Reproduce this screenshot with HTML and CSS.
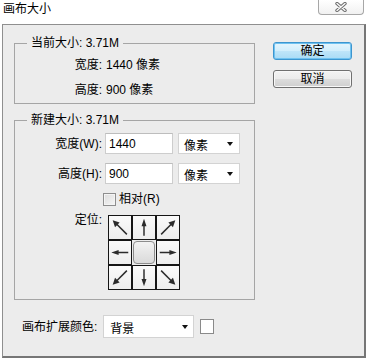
FILE: index.html
```html
<!DOCTYPE html>
<html lang="zh-CN">
<head>
<meta charset="utf-8">
<title>画布大小</title>
<link rel="stylesheet" href="styles.css">
</head>
<body>
<svg class="defs" width="0" height="0" aria-hidden="true">
  <defs>
    <symbol id="arr-n" viewBox="0 0 24 24">
      <line x1="12" y1="21" x2="12" y2="9" stroke="#2b2b2b" stroke-width="1.6"/>
      <polygon points="12,2.5 9.3,10.5 14.7,10.5" fill="#2b2b2b"/>
    </symbol>
    <symbol id="arr-ne" viewBox="0 0 24 24">
      <line x1="4.5" y1="19.5" x2="15.5" y2="8.5" stroke="#2b2b2b" stroke-width="1.6"/>
      <polygon points="20,4 17.4,11.6 12.4,6.6" fill="#2b2b2b"/>
    </symbol>
  </defs>
</svg>

<div class="titlebar">
  <span class="title">画布大小</span>
  <div class="close">
    <svg width="12" height="10" viewBox="0 0 12 10">
      <path d="M2 1.5 L10 8.5 M10 1.5 L2 8.5" stroke="#6c6c6c" stroke-width="3.4" stroke-linecap="round"/>
      <path d="M2 1.5 L10 8.5 M10 1.5 L2 8.5" stroke="#fbfbfb" stroke-width="1.4" stroke-linecap="round"/>
    </svg>
  </div>
</div>

<div class="panel">
  <div class="top">
    <div class="left">
      <fieldset class="group g1">
        <legend>当前大小: 3.71M</legend>
        <div class="row info"><span class="lbl">宽度:</span><span class="val">1440 像素</span></div>
        <div class="row info"><span class="lbl">高度:</span><span class="val">900 像素</span></div>
      </fieldset>

      <fieldset class="group g2">
        <legend>新建大小: 3.71M</legend>
        <div class="row field">
          <span class="lbl">宽度(W):</span>
          <span class="input">1440</span>
          <span class="select unit"><span class="sel-text">像素</span><span class="caret"></span></span>
        </div>
        <div class="row field second">
          <span class="lbl">高度(H):</span>
          <span class="input">900</span>
          <span class="select unit"><span class="sel-text">像素</span><span class="caret"></span></span>
        </div>
        <div class="row check">
          <span class="box"></span><span class="check-text">相对(R)</span>
        </div>
        <div class="row anchor">
          <span class="lbl anchor-lbl">定位:</span>
          <div class="grid">
            <span class="cell"><svg viewBox="0 0 24 24"><use href="#arr-ne" transform="rotate(-90 12 12)"/></svg></span>
            <span class="cell"><svg viewBox="0 0 24 24"><use href="#arr-n"/></svg></span>
            <span class="cell"><svg viewBox="0 0 24 24"><use href="#arr-ne"/></svg></span>
            <span class="cell"><svg viewBox="0 0 24 24"><use href="#arr-n" transform="rotate(-90 12 12)"/></svg></span>
            <span class="cell center"><span class="knob"></span></span>
            <span class="cell"><svg viewBox="0 0 24 24"><use href="#arr-n" transform="rotate(90 12 12)"/></svg></span>
            <span class="cell"><svg viewBox="0 0 24 24"><use href="#arr-ne" transform="rotate(180 12 12)"/></svg></span>
            <span class="cell"><svg viewBox="0 0 24 24"><use href="#arr-n" transform="rotate(180 12 12)"/></svg></span>
            <span class="cell"><svg viewBox="0 0 24 24"><use href="#arr-ne" transform="rotate(90 12 12)"/></svg></span>
          </div>
        </div>
      </fieldset>
    </div>

    <div class="buttons">
      <span class="btn primary">确定</span>
      <span class="btn">取消</span>
    </div>
  </div>

  <div class="bottom">
    <span class="bottom-lbl">画布扩展颜色:</span>
    <span class="select ext"><span class="sel-text">背景</span><span class="caret"></span></span>
    <span class="swatch"></span>
  </div>
</div>
</body>
</html>
```

FILE: styles.css
```css
* { box-sizing: border-box; }

html, body { margin: 0; padding: 0; }

body {
  width: 367px;
  height: 360px;
  overflow: hidden;
  background: #ffffff;
  color: #000;
  font-family: "Liberation Sans", "Noto Sans CJK SC", sans-serif;
  font-size: 12px;
  line-height: 16px;
}

.defs { position: absolute; width: 0; height: 0; overflow: hidden; }

/* title bar */
.titlebar {
  height: 24px;
  display: flex;
  justify-content: space-between;
  align-items: flex-start;
}

.title {
  margin: 1px 0 0 3px;
}

.close {
  margin-right: 3px;
  width: 46px;
  height: 15px;
  border: 1px solid #a7a7a7;
  border-top: none;
  border-radius: 0 0 4px 4px;
  background: linear-gradient(#ffffff, #f1f1f1);
  display: flex;
  align-items: center;
  justify-content: center;
}

/* main panel */
.panel {
  margin-left: 2px;
  width: 364px;
  height: 334px;
  border: 1px solid #8f8f8f;
  border-right: 2px solid #767676;
  border-bottom: 2px solid #767676;
  background: #ececec;
}

.top { display: flex; }

.left {
  margin-left: 11px;
  width: 241px;
}

.group {
  margin: 0;
  padding: 0;
  min-width: 0;
  border: 1px solid #a5a5a5;
}

.group legend {
  margin-left: 12px;
  padding: 0 4px;
  line-height: 16px;
}

.g1 {
  margin-top: 10px;
  padding: 1px 0 1px;
}

.g2 {
  margin-top: 8px;
  padding: 5px 0 9px;
}

.row {
  display: flex;
  align-items: center;
}

.info { height: 25px; }

.lbl {
  width: 87px;
  flex: none;
  text-align: right;
}

.val { margin-left: 4px; }

.field { height: 21px; }
.field.second { margin-top: 9px; }

.input {
  margin-left: 3px;
  width: 68px;
  height: 21px;
  padding: 2px 0 0 3px;
  background: #fff;
  border: 1px solid #cdcdcd;
  border-top-color: #bdbdbd;
}

.select {
  display: flex;
  justify-content: space-between;
  align-items: center;
  background: #fff;
  border: 1px solid #d3d3d3;
}

.sel-text { padding-top: 4px; }

.caret {
  width: 0;
  height: 0;
  border-left: 3px solid transparent;
  border-right: 3px solid transparent;
  border-top: 4px solid #111;
}

.unit {
  margin-left: 5px;
  width: 62px;
  height: 21px;
  padding: 0 6px 0 5px;
}

.check {
  margin-top: 8px;
  height: 14px;
}

.box {
  margin-left: 88px;
  width: 13px;
  height: 13px;
  border: 1px solid #8e8e8e;
  background: linear-gradient(135deg, #dcdcdc, #f6f6f6);
  box-shadow: inset 0 0 0 1px #f4f4f4;
}

.check-text { margin-left: 3px; }

.anchor {
  margin-top: 9px;
  align-items: flex-start;
}

.anchor-lbl { margin-top: -3px; }

.grid {
  margin-left: 6px;
  display: grid;
  grid-template-columns: repeat(3, 24px);
  grid-template-rows: repeat(3, 25px);
}

.cell {
  border: 1px solid #151515;
  background: linear-gradient(#fafafa, #ededed);
  display: flex;
  align-items: center;
  justify-content: center;
}

.cell svg {
  width: 22px;
  height: 23px;
  display: block;
}

.cell.center {
  border: none;
  background: transparent;
  padding: 1px;
}

.knob {
  width: 100%;
  height: 100%;
  border: 1px solid #8c8c8c;
  border-radius: 4px;
  background: linear-gradient(#f2f2f2, #dadada);
}

/* buttons */
.buttons {
  margin: 17px 0 0 18px;
  display: flex;
  flex-direction: column;
  gap: 10px;
}

.btn {
  width: 79px;
  height: 18px;
  border: 1px solid #707070;
  border-radius: 3px;
  background: linear-gradient(#f3f3f3, #ebebeb 50%, #dddddd 50%, #cfcfcf);
  box-shadow: inset 0 0 0 1px #f8f8f8;
  text-align: center;
  line-height: 16px;
}

.btn.primary {
  border-color: #3d95cf;
  background: linear-gradient(#e6f5fd, #d1eefc 50%, #bfe5f9 50%, #a9dbf6);
  box-shadow: inset 0 0 0 1px #6fc2f0;
}

/* bottom row */
.bottom {
  margin-top: 15px;
  padding-left: 19px;
  display: flex;
  align-items: center;
}

.ext {
  margin-left: 6px;
  width: 91px;
  height: 23px;
  padding: 0 5px 0 6px;
}

.swatch {
  margin-left: 6px;
  width: 14px;
  height: 15px;
  border: 1px solid #8a8a8a;
  background: #fff;
}
```
